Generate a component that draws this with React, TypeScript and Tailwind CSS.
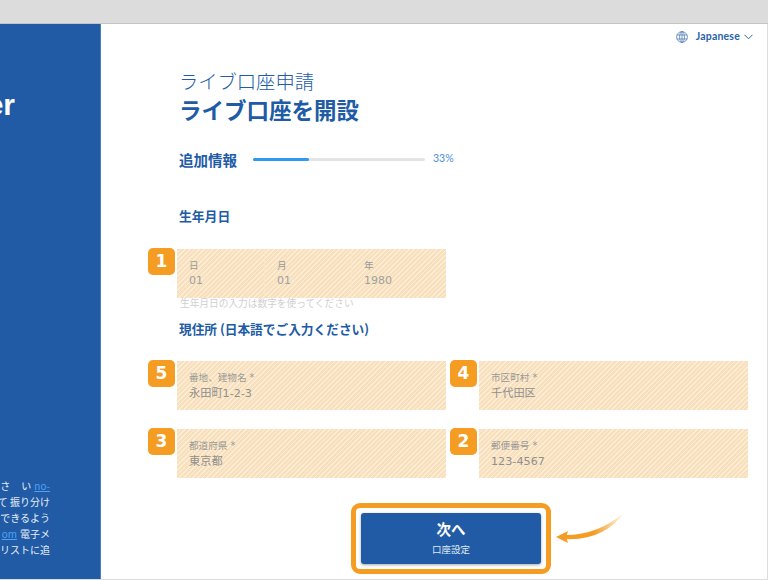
const hatch =
  "bg-[repeating-linear-gradient(135deg,#f8e0bd_0px,#f8e0bd_2.2px,#fcedd8_2.2px,#fcedd8_3.3px)]";
const fieldFont = "font-['DejaVu_Sans','Noto_Sans_CJK_JP',sans-serif]";

function Badge({ n }: { n: number }) {
  return (
    <div className="absolute left-[-29px] top-[-1px] flex h-[27px] w-[27px] items-center justify-center rounded-[5px] bg-[#f59c23] text-[17px] font-bold text-white">
      {n}
    </div>
  );
}

function Field({ n, label, value }: { n: number; label: string; value: string }) {
  return (
    <div className={`relative h-[49px] w-[269px] pl-3 pt-[10px] ${hatch} ${fieldFont}`}>
      <Badge n={n} />
      <div className="text-[9.6px] leading-[14px] text-[#9a9a96]">{label}</div>
      <div className="text-[11.2px] leading-[18px] text-[#8f8f8d]">{value}</div>
    </div>
  );
}

function DatePart({ label, value, width }: { label: string; value: string; width: string }) {
  return (
    <div className={`h-full pl-3 pt-[10px] ${width}`}>
      <div className="text-[9.6px] leading-[14px] text-[#9a9a96]">{label}</div>
      <div className="text-[11px] leading-[15px] text-[#a0a09c]">{value}</div>
    </div>
  );
}

function GlobeIcon() {
  return (
    <svg width="12" height="12" viewBox="0 0 12 12" fill="none" stroke="currentColor" strokeWidth="0.7" className="ml-0 opacity-90">
      <circle cx="6" cy="6" r="5.4" />
      <ellipse cx="6" cy="6" rx="2.4" ry="5.4" />
      <path d="M0.8 4H11.2M0.8 8H11.2M6 0.6V11.4" />
    </svg>
  );
}

export default function App() {
  return (
    <div className="flex h-[580px] w-[768px] flex-col overflow-hidden bg-white font-['Noto_Sans_CJK_JP','Noto_Sans',sans-serif]">
      <div className="h-6 shrink-0 border-b border-[#c4c4c4] bg-[#dcdcdc]" />
      <div className="flex min-h-0 flex-1 border-b border-r border-[#dddddd]">
        <aside className="flex w-[101px] shrink-0 flex-col overflow-hidden border-r border-[#4c7cb9] bg-[#215ba6] pb-[21px] text-white">
          <div className="mt-[62px] flex w-[15px] justify-end overflow-hidden whitespace-nowrap font-['Liberation_Sans',sans-serif] text-[30px] font-bold leading-[38px]">
            Trader
          </div>
          <div className="mt-auto flex w-[50px] flex-col whitespace-nowrap text-[10px] leading-[16px] text-[#e8eef7]">
            <div className="flex justify-end">
              <span className="mr-[11px]">さ</span>
              <span className="mr-[3px]">い</span>
              <span className="text-[#4aa3f5] underline">no-</span>
            </div>
            <div className="flex justify-end overflow-hidden">て 振り分け</div>
            <div className="flex justify-end overflow-hidden">できるよう</div>
            <div className="flex justify-end overflow-hidden">
              <span className="text-[#4aa3f5] underline">om</span>
              <span className="ml-[3px]">電子メ</span>
            </div>
            <div className="flex justify-end overflow-hidden">リストに追</div>
          </div>
        </aside>
        <main className="min-w-0 flex-1">
          <div className="flex h-6 items-center justify-end pr-[14px] pt-[1px] font-['Lato',sans-serif] text-[#2b63ab]">
            <GlobeIcon />
            <span className="ml-[8px] text-[10.5px] font-bold tracking-[0.2px]">Japanese</span>
            <svg width="9" height="6" viewBox="0 0 9 6" fill="none" stroke="currentColor" strokeWidth="1" className="ml-[4px]">
              <path d="M0.5 0.8L4.5 4.8L8.5 0.8" />
            </svg>
          </div>
          <div className="pl-[76px]">
            <h2 className="mt-[20px] pl-[2px] text-[19.3px] font-light leading-[26px] text-[#215ba6]">
              ライブ口座申請
            </h2>
            <h1 className="pl-[2px] text-[22.5px] font-bold leading-[30px] text-[#215ba6]">
              ライブ口座を開設
            </h1>
            <div className="mt-[25px] flex h-[20px] items-center">
              <div className="pl-[2px] pt-[1px] text-[14.5px] font-bold text-[#215ba6]">追加情報</div>
              <div className="ml-[16px] h-[3px] w-[172px] rounded-full bg-[#e4e4e4]">
                <div className="h-full w-[56px] rounded-full bg-[#2f9bf0]" />
              </div>
              <div className="ml-[8px] font-['Lato',sans-serif] text-[10.5px] text-[#4a90d6]">33%</div>
            </div>
            <div className="mt-[38px] pl-[2px] text-[12.8px] font-bold leading-[18px] text-[#215ba6]">
              生年月日
            </div>
            <div className={`relative mt-[24px] flex h-[49px] w-[269px] ${hatch} ${fieldFont}`}>
              <Badge n={1} />
              <DatePart label="日" value="01" width="w-[88px] border-r border-[#fbe6c8]" />
              <DatePart label="月" value="01" width="w-[87px] border-r border-[#fbe6c8]" />
              <DatePart label="年" value="1980" width="w-[94px]" />
            </div>
            <div className="mt-[-2px] pl-[3px] text-[9.7px] leading-[14px] text-[#cfcfcf]">
              生年月日の入力は数字を使ってください
            </div>
            <div className="mt-[10px] pl-[2px] text-[12.7px] font-bold leading-[18px] text-[#215ba6]">
              現住所 (日本語でご入力ください)
            </div>
            <div className="mt-[23px] grid w-[571px] grid-cols-[269px_269px] gap-x-[33px] gap-y-[19px]">
              <Field n={5} label="番地、建物名 *" value="永田町1-2-3" />
              <Field n={4} label="市区町村 *" value="千代田区" />
              <Field n={3} label="都道府県 *" value="東京都" />
              <Field n={2} label="郵便番号 *" value="123-4567" />
            </div>
            <div className="mt-[25px] flex items-center">
              <div className="ml-[174px] rounded-[9px] border-[5px] border-[#f59c23] p-[5px]">
                <button className="flex h-[51px] w-[180px] flex-col items-center justify-center rounded-[3px] bg-[#215ba6] pb-[2px] text-white shadow-[0_1px_3px_rgba(0,0,0,0.35)]">
                  <span className="mb-[3px] text-[14.5px] font-bold leading-[20px]">次へ</span>
                  <span className="text-[9.5px] leading-[14px] text-[#dfe8f3]">口座設定</span>
                </button>
              </div>
              <svg width="74" height="44" viewBox="0 0 74 44" className="ml-[2px] mt-[-14px]">
                <defs>
                  <linearGradient id="tail" gradientUnits="userSpaceOnUse" x1="40" y1="22" x2="72" y2="2">
                    <stop offset="0" stopColor="#f59c23" />
                    <stop offset="1" stopColor="#f59c23" stopOpacity="0" />
                  </linearGradient>
                </defs>
                <path d="M13 25 Q45 25 72 2 Q50 31 13 29 Z" fill="url(#tail)" />
                <path d="M3 27 L15 21 L13 27 L15 33 Z" fill="#f59c23" />
              </svg>
            </div>
          </div>
        </main>
      </div>
    </div>
  );
}
